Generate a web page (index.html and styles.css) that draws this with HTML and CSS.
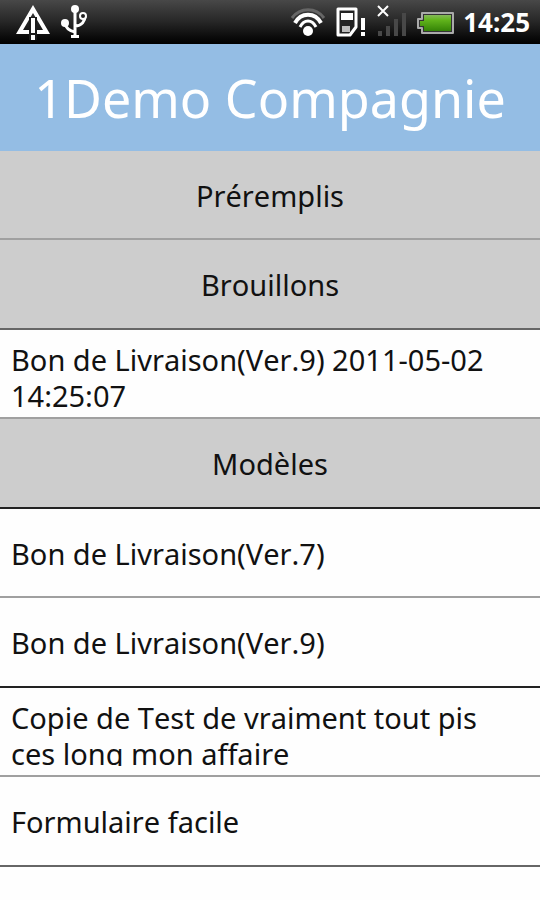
FILE: index.html
```html
<!DOCTYPE html>
<html lang="fr">
<head>
    <meta charset="UTF-8">
    <meta name="viewport" content="width=device-width, initial-scale=1.0">
    <title>1Demo Compagnie</title>
    <link rel="stylesheet" href="styles.css">
</head>
<body>
    <div class="status-bar">
        <div class="status-left">
            <svg width="38" height="36" viewBox="0 0 38 36" aria-hidden="true">
                <path d="M19 1L36 30H2Z M19 9L9 26H29Z" fill="#fff" fill-rule="evenodd"/>
                <path d="M15 13h8v23h-8z" fill="#1c1c1c"/>
                <path d="M17 14h4v15h-4z M17 31h4v5h-4z" fill="#fff"/>
            </svg>
            <svg width="28" height="36" viewBox="0 0 28 36" aria-hidden="true">
                <path d="M15 5V31 M5 19C6 25 10 27 15 28 M15 22C22 22 25 17 25 12" fill="none" stroke="#fff" stroke-width="3"/>
                <circle cx="15" cy="5" r="4" fill="#fff"/>
                <circle cx="5" cy="19" r="4" fill="#fff"/>
                <circle cx="23" cy="12" r="3" fill="#222" stroke="#fff" stroke-width="2"/>
                <path d="M11 31h8v3h-8z" fill="#fff"/>
            </svg>
        </div>
        <div class="status-right">
            <svg width="36" height="36" viewBox="0 0 36 36" aria-hidden="true">
                <g fill="none" stroke-width="3">
                    <path d="M1 14C9 3 25 3 33 14" stroke="#666"/>
                    <path d="M4 19C10 8 24 8 30 19" stroke="#fff" stroke-width="4"/>
                    <path d="M9 23C13 15 21 15 25 23" stroke="#fff"/>
                </g>
                <circle cx="17" cy="27" r="5" fill="#fff"/>
            </svg>
            <svg width="32" height="36" viewBox="0 0 32 36" aria-hidden="true">
                <path d="M3 5h18v18l-6 8H3z" fill="#222" stroke="#fff" stroke-width="3" stroke-linejoin="round"/>
                <path d="M6 9h12v7H6z" fill="#fff"/>
                <path d="M7 22h8v6H7z" fill="#bbb"/>
                <path d="M26 14h4v12h-4z M26 28h4v4h-4z" fill="#fff"/>
            </svg>
            <svg width="32" height="36" viewBox="0 0 32 36" aria-hidden="true">
                <path d="M3 2l10 10 M13 2L3 12" stroke="#fff" stroke-width="2"/>
                <path d="M3 27h4v5H3z M11 22h4v10h-4z M19 15h4v17h-4z M27 9h4v23h-4z" fill="#484848"/>
            </svg>
            <svg width="40" height="36" viewBox="0 0 40 36" aria-hidden="true">
                <defs>
                    <linearGradient id="charge" x2="0" y2="1">
                        <stop offset="0" stop-color="#86b85a"/>
                        <stop offset=".3" stop-color="#62b51c"/>
                        <stop offset="1" stop-color="#348306"/>
                    </linearGradient>
                </defs>
                <path d="M7 9h31v20H7v-5H3v-9h4z" fill="#333" stroke="#aaa" stroke-width="2" stroke-linejoin="round"/>
                <path d="M9 11h27v16H9v-5H5v-5h4z" fill="url(#charge)"/>
            </svg>
            <time class="clock">14:25</time>
        </div>
    </div>
    <h1 class="title">1Demo Compagnie</h1>
    <ul class="list">
        <li class="row section">Préremplis</li>
        <li class="row section dark">Brouillons</li>
        <li class="row"><a href="#" class="long">Bon de Livraison(Ver.9) 2011-05-02 14:25:07</a></li>
        <li class="row section black">Modèles</li>
        <li class="row"><a href="#">Bon de Livraison(Ver.7)</a></li>
        <li class="row black"><a href="#">Bon de Livraison(Ver.9)</a></li>
        <li class="row"><a href="#" class="long">Copie de Test de vraiment tout pis ces long mon affaire</a></li>
        <li class="row dark"><a href="#">Formulaire facile</a></li>
    </ul>
</body>
</html>
```
FILE: styles.css
```css
* {
    box-sizing: border-box;
}

body {
    margin: 0;
    min-height: 100vh;
    background-color: #fefefe;
    color: #111;
    font-family: "Noto Sans", "Open Sans", sans-serif;
    font-kerning: none;
}

.status-bar {
    display: flex;
    justify-content: space-between;
    align-items: center;
    height: 44px;
    padding: 0 10px 0 14px;
    background: linear-gradient(#484848, #262626 50%, #0a0a0a 85%, #000);
}

.status-left,
.status-right {
    display: flex;
    align-items: center;
    gap: 8px;
}

.clock {
    color: #fff;
    font-size: 26px;
    font-weight: bold;
}

.title {
    margin: 0;
    padding: 14px 0 13px;
    background-color: #94bde4;
    color: #fff;
    font-size: 52px;
    font-weight: normal;
    line-height: 80px;
    text-align: center;
}

.list {
    margin: 0;
    padding: 0;
    list-style: none;
}

.row {
    display: flex;
    align-items: center;
    height: 90px;
    padding: 12px 11px 10px;
    border-bottom: 2px solid #a0a0a0;
    font-size: 29px;
    line-height: 36px;
}

.row:nth-child(odd) {
    height: 89px;
}

.row a {
    padding-right: 16px;
    color: inherit;
    text-decoration: none;
}

/* two lines at most, cut at the row's padding */
.row .long {
    max-height: 66px;
    overflow: hidden;
}

.section {
    justify-content: center;
    background-color: #cdcdcd;
}

.dark {
    border-bottom-color: #666;
}

.black {
    border-bottom-color: #222;
}
```
